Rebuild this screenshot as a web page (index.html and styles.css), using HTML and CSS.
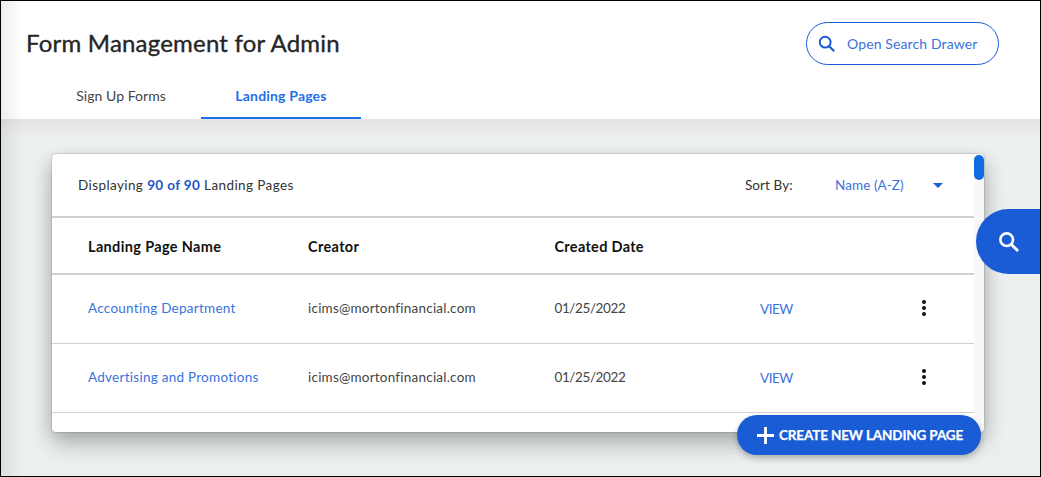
FILE: index.html
```html
<!DOCTYPE html>
<html lang="en">
<head>
<meta charset="utf-8">
<title>Form Management for Admin</title>
<link rel="stylesheet" href="styles.css">
</head>
<body>
<div class="frame">
  <header class="header">
    <div class="title-row">
      <h1 class="title">Form Management for Admin</h1>
      <button class="drawer-btn">
        <svg class="drawer-icon" viewBox="0 0 20 20"><circle cx="8" cy="8" r="6" fill="none" stroke="currentColor" stroke-width="2.2"/><path d="M12.4 12.4L18 18" stroke="currentColor" stroke-width="2.4" fill="none"/></svg>
        <span>Open Search Drawer</span>
      </button>
    </div>
    <nav class="tabs">
      <a class="tab">Sign Up Forms</a>
      <a class="tab tab-active">Landing Pages</a>
    </nav>
  </header>
  <main class="content">
    <section class="card">
      <div class="card-inner">
        <div class="toolbar">
          <p class="count">Displaying <b class="count-num">90 of 90</b> Landing Pages</p>
          <div class="sort">
            <span class="sort-label">Sort By:</span>
            <span class="sort-value">Name (A-Z)</span>
            <span class="caret"></span>
          </div>
        </div>
        <div class="row row-head">
          <span class="c-name">Landing Page Name</span>
          <span class="c-creator">Creator</span>
          <span class="c-date">Created Date</span>
        </div>
        <div class="row">
          <a class="c-name link">Accounting Department</a>
          <span class="c-creator">icims@mortonfinancial.com</span>
          <span class="c-date">01/25/2022</span>
          <a class="c-view">VIEW</a>
          <span class="kebab"><i></i><i></i><i></i></span>
        </div>
        <div class="row">
          <a class="c-name link">Advertising and Promotions</a>
          <span class="c-creator">icims@mortonfinancial.com</span>
          <span class="c-date">01/25/2022</span>
          <a class="c-view">VIEW</a>
          <span class="kebab"><i></i><i></i><i></i></span>
        </div>
      </div>
      <div class="scrollbar"><div class="thumb"></div></div>
    </section>
    <button class="fab">
      <svg class="fab-plus" viewBox="0 0 18 18"><path d="M9 0V18M0 9H18" stroke="#fff" stroke-width="3" fill="none"/></svg>
      <span>CREATE NEW LANDING PAGE</span>
    </button>
    <button class="side-search" aria-label="Search">
      <svg viewBox="0 0 22 22" class="side-icon"><circle cx="8.7" cy="8.7" r="6.3" fill="none" stroke="#fff" stroke-width="2.6"/><path d="M13.4 13.4L20 20" stroke="#fff" stroke-width="2.8" fill="none"/></svg>
    </button>
  </main>
</div>
</body>
</html>
```
FILE: styles.css
```css
* { box-sizing: border-box; }
html, body { margin: 0; padding: 0; }
body { font-family: "Lato", "Liberation Sans", sans-serif; color: #333; }
.frame {
  width: 1041px; height: 477px;
  border: 1px solid #000;
  overflow: hidden;
  display: flex; flex-direction: column;
  background: #edf0f1;
  position: relative;
}
.frame::before {
  content: ""; position: absolute; left: 0; top: 0; bottom: 0; width: 22px;
  background: linear-gradient(to right, rgba(0,0,0,.07), rgba(0,0,0,0));
  z-index: 3; pointer-events: none;
}
.header { background: #fff; height: 118px; flex: none; position: relative; }
.title-row {
  display: flex; justify-content: space-between; align-items: flex-start;
  padding: 21px 41px 0 25px; height: 74px;
}
.title { margin: 8px 0 0; font-size: 24px; line-height: 26px; font-weight: 400; color: #262626; letter-spacing: .2px; -webkit-text-stroke: .35px #262626; }
.drawer-btn {
  width: 193px; height: 43px; border: 1px solid #1a5bd6; border-radius: 22px;
  background: #fff; color: #3b72dc;
  display: flex; align-items: center; padding: 0 0 0 11px; gap: 11px;
  font: 400 14px "Lato", sans-serif; letter-spacing: .12px;
}
.drawer-icon { width: 18px; height: 18px; color: #1a5bd6; flex: none; }
.tabs { display: flex; padding-left: 40px; height: 44px; }
.tab { width: 160px; display: flex; align-items: center; justify-content: center; font-size: 14px; letter-spacing: .05px; color: #444; padding-bottom: 3px; }
.tab-active { color: #1f6fe8; font-weight: 700; border-bottom: 2px solid #1f6fe8; padding-bottom: 1px; letter-spacing: .18px; }
.content {
  flex: 1; position: relative; padding: 35px 56px 0 51px;
  background: linear-gradient(to bottom, #e3e4e5 0, #edf0f1 22px);
}
.card {
  display: flex; height: 278px; width: 932px;
  background: #fff; border-radius: 4px; overflow: hidden;
  box-shadow: 0 0 2px rgba(0,0,0,.35), 0 14px 22px rgba(0,0,0,.2), -6px 4px 16px rgba(0,0,0,.08), 6px 4px 16px rgba(0,0,0,.08);
}
.card-inner { flex: 1; min-width: 0; }
.scrollbar { width: 10px; background: #f8f8f8; flex: none; }
.thumb { height: 25px; width: 10px; background: #0f6be0; border-radius: 5px; margin-top: 1px; }
.toolbar {
  height: 64px; display: flex; align-items: center; justify-content: space-between;
  padding: 0 31px 0 26px; border-bottom: 2px solid #d0d0d0;
  font-size: 13.5px; letter-spacing: .4px;
}
.count { margin: 0; color: #333; }
.count-num { color: #1f56c8; font-weight: 700; letter-spacing: .38px; }
.sort { display: flex; align-items: center; letter-spacing: .08px; }
.sort-label { width: 90px; color: #333; }
.sort-value { width: 98px; color: #3b72dc; }
.caret { width: 0; height: 0; border-left: 5px solid transparent; border-right: 5px solid transparent; border-top: 5px solid #1a5bd6; }
.row {
  display: flex; align-items: center; height: 69px;
  border-bottom: 1px solid #d0d0d0;
  padding: 0 0 2px 36px; font-size: 13.5px; letter-spacing: .22px; color: #444;
}
.row-head { height: 57px; border-bottom: 2px solid #d0d0d0; padding: 1px 0 0 36px; font-size: 14.5px; font-weight: 700; color: #111; letter-spacing: .35px; }
.c-name { width: 220px; flex: none; }
.c-creator { width: 246.5px; flex: none; }
.c-date { width: 205.5px; flex: none; letter-spacing: -.4px; }
.row-head .c-date { letter-spacing: .3px; }
.c-view { width: 162px; flex: none; color: #3b72dc; font-size: 13.5px; letter-spacing: -.5px; padding-top: 2px; }
.link { color: #3b72dc; letter-spacing: .26px; }
.kebab { display: flex; flex-direction: column; gap: 2px; }
.kebab i { width: 4px; height: 4px; border-radius: 50%; background: #111; display: block; }
.fab {
  position: absolute; left: 736px; top: 296px;
  width: 244px; height: 40px; border: 0; border-radius: 20px;
  background: #1a5bd6; color: #fff;
  display: flex; align-items: center; padding: 0 0 0 20px; gap: 5px;
  font: 700 13.5px "Lato", sans-serif; letter-spacing: -.14px; white-space: nowrap;
  -webkit-text-stroke: .25px #fff;
  box-shadow: 0 3px 6px rgba(0,0,0,.25);
}
.fab-plus { width: 17px; height: 17px; flex: none; }
.side-search {
  position: absolute; left: 975px; top: 90px;
  width: 66px; height: 65px; border: 0;
  background: #1a5bd6; border-radius: 33px 0 0 33px;
  display: flex; align-items: center; padding: 0 0 0 22px;
}
.side-icon { width: 22px; height: 22px; flex: none; }
```
